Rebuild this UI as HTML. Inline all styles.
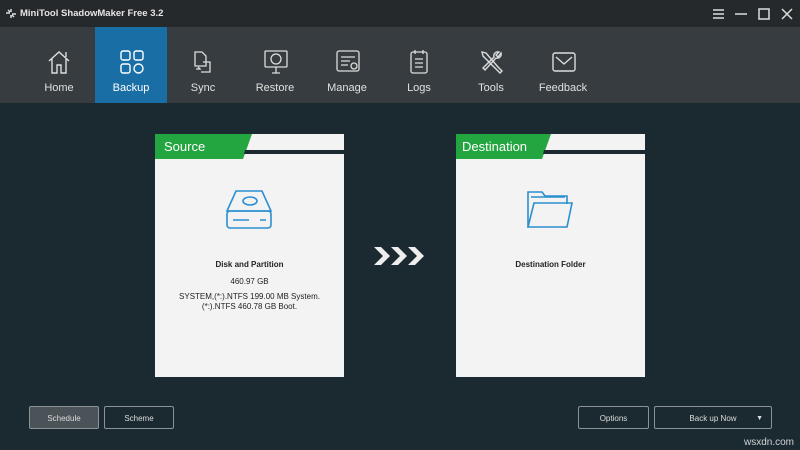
<!DOCTYPE html>
<html><head><style>
body{margin:0;width:800px;height:450px;overflow:hidden;background:#1b2a30;font-family:"Liberation Sans",sans-serif;position:relative}
.t{position:absolute;left:0;top:0;width:800px;height:27px;background:#25292c;color:#e6e6e6;font-size:9.5px;font-weight:bold}
.nav{position:absolute;left:0;top:27px;width:800px;height:76px;background:#363c40}
.it{position:absolute;top:0;width:72px;height:76px;color:#e0e0e0;font-size:11px;text-align:center}
.it svg{position:absolute;left:24px;top:22px}
.it span{position:absolute;left:0;right:0;top:55px}
.card{position:absolute;top:134px;width:189px;height:243px;background:#f3f3f3;font-size:8px;color:#222;text-align:center}
.btn{position:absolute;top:406px;height:23px;border:1px solid #8a9296;border-radius:2px;color:#ddd;font-size:8px;text-align:center;line-height:23px;box-sizing:border-box}
</style></head><body>
<div class="t">
<svg style="position:absolute;left:5px;top:8px" width="12" height="11" viewBox="0 0 12 11" fill="none" stroke="#ddd" stroke-width="1.5"><path d="M1 5h4M7 6h4M6 1v3M6 7v3M3 2l2 2M9 9l-2-2"/></svg>
<span style="position:absolute;left:20px;top:8px">MiniTool ShadowMaker Free 3.2</span>
<svg style="position:absolute;left:711px;top:7px" width="85" height="14" viewBox="0 0 85 14" fill="none" stroke="#ddd" stroke-width="1.5"><path d="M2 3h11M2 7h11M2 11h11M24 7h12M48 2h10v10h-10zM71 2l10 10M81 2l-10 10"/></svg>
</div>
<div class="nav">
<div class="it" style="left:23px"><svg width="24" height="26" viewBox="0 0 24 26" fill="none" stroke="#ddd" stroke-width="1.4"><path d="M2 12L12 3l10 9M5 10v14h5v-8h4v8h5V10M19 3v5"/></svg><span>Home</span></div>
<div class="it" style="left:95px;background:#1a6ea6"><svg width="26" height="26" viewBox="0 0 26 26" fill="none" stroke="#fff" stroke-width="1.4"><rect x="2" y="2" width="9" height="9" rx="2"/><rect x="15" y="2" width="9" height="9" rx="2"/><rect x="2" y="15" width="9" height="9" rx="2"/><circle cx="19.5" cy="19.5" r="4.5"/></svg><span style="color:#fff">Backup</span></div>
<div class="it" style="left:167px"><svg width="24" height="26" viewBox="0 0 24 26" fill="none" stroke="#ddd" stroke-width="1.3"><path d="M4 3h7l4 4v10H4zM12 13h7v10h-9M5 20h4l-2-2"/></svg><span>Sync</span></div>
<div class="it" style="left:239px"><svg width="26" height="26" viewBox="0 0 26 26" fill="none" stroke="#ddd" stroke-width="1.3"><rect x="2" y="2" width="22" height="16" rx="1"/><circle cx="13" cy="10" r="5"/><path d="M9 24h8M13 18v6"/></svg><span>Restore</span></div>
<div class="it" style="left:311px"><svg width="26" height="26" viewBox="0 0 26 26" fill="none" stroke="#ddd" stroke-width="1.3"><rect x="2" y="2" width="22" height="20" rx="2"/><path d="M6 8h14M6 12h9M6 16h7"/><circle cx="19" cy="17" r="3"/></svg><span>Manage</span></div>
<div class="it" style="left:383px"><svg width="24" height="26" viewBox="0 0 24 26" fill="none" stroke="#ddd" stroke-width="1.3"><rect x="4" y="3" width="16" height="21" rx="2"/><path d="M8 1v4M16 1v4M8 10h8M8 14h8M8 18h8"/></svg><span>Logs</span></div>
<div class="it" style="left:455px"><svg width="26" height="26" viewBox="0 0 26 26" fill="none" stroke="#ddd" stroke-width="1.4"><path d="M3 3l4 1 12 14 4 4-2 2-4-4L4 7zM22 4a4 4 0 0 1-5 5L6 21l-2-2L15 8a4 4 0 0 1 5-5l-3 3 2 2z"/></svg><span>Tools</span></div>
<div class="it" style="left:527px"><svg width="26" height="26" viewBox="0 0 26 26" fill="none" stroke="#ddd" stroke-width="1.4"><rect x="2" y="4" width="22" height="18" rx="2"/><path d="M5 8l8 7 8-7"/></svg><span>Feedback</span></div>
</div>

<div class="card" style="left:155px">
<svg style="position:absolute;left:0;top:0" width="189" height="28"><polygon points="0,0 97,0 88,25 0,25" fill="#23a540"/><polygon points="90,16 189,16 189,20 89,20" fill="#1b2a30"/></svg>
<div style="position:absolute;left:9px;top:5px;color:#fff;font-size:13px">Source</div>
<svg style="position:absolute;left:69px;top:55px" width="50" height="42" viewBox="0 0 50 42" fill="none" stroke="#2a8fd0" stroke-width="1.6"><path d="M12 2h26l9 20H3z"/><rect x="3" y="22" width="44" height="17" rx="3"/><ellipse cx="26" cy="12" rx="7" ry="4"/><path d="M9 31h16M36 31h6"/></svg>
<div style="position:absolute;left:0;right:0;top:126px;font-weight:bold">Disk and Partition</div>
<div style="position:absolute;left:0;right:0;top:143px">460.97 GB</div>
<div style="position:absolute;left:0;right:0;top:158px;line-height:10px">SYSTEM,(*:).NTFS 199.00 MB System.<br>(*:).NTFS 460.78 GB Boot.</div>
</div>

<svg style="position:absolute;left:374px;top:247px" width="52" height="18" viewBox="0 0 52 18" fill="#eee"><path d="M0 0h7l9 9-9 9H0l9-9zM17 0h7l9 9-9 9h-7l9-9zM34 0h7l9 9-9 9h-7l9-9z"/></svg>

<div class="card" style="left:456px">
<svg style="position:absolute;left:0;top:0" width="189" height="28"><polygon points="0,0 95,0 86,25 0,25" fill="#23a540"/><polygon points="88,16 189,16 189,20 87,20" fill="#1b2a30"/></svg>
<div style="position:absolute;left:6px;top:5px;color:#fff;font-size:13px">Destination</div>
<svg style="position:absolute;left:70px;top:55px" width="48" height="40" viewBox="0 0 48 40" fill="none" stroke="#2a8fd0" stroke-width="1.6"><path d="M2 38V3h14l3 4h22v8M5 8h34"/><path d="M2 38l6-24h38l-5 24z"/></svg>
<div style="position:absolute;left:0;right:0;top:126px;font-weight:bold">Destination Folder</div>
</div>

<div class="btn" style="left:29px;width:70px;background:#4a5357">Schedule</div>
<div class="btn" style="left:104px;width:70px">Scheme</div>
<div class="btn" style="left:578px;width:71px">Options</div>
<div class="btn" style="left:654px;width:118px">Back up Now<span style="position:absolute;right:8px;top:0;font-size:7px">▼</span></div>
<div style="position:absolute;left:744px;top:437px;color:#cfd4d6;font-size:10px">wsxdn.com</div>
</body></html>
